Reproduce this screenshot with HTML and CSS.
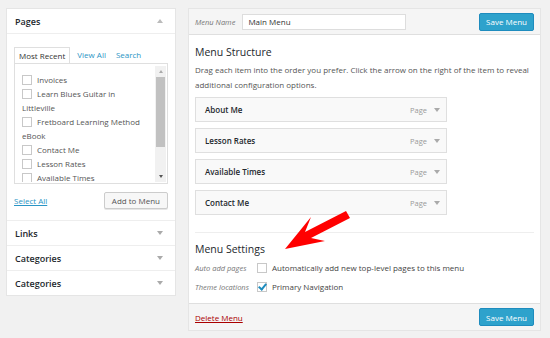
FILE: index.html
```html
<!DOCTYPE html>
<html lang="en">
<head>
  <meta charset="UTF-8">
  <title>Menus</title>
  <link rel="stylesheet" href="styles.css">
</head>
<body>
  <div class="wrap">
    <!-- Left: add items -->
    <div class="side">
      <div class="box-head open">
        <span>Pages</span><span class="tri up"></span>
      </div>
      <div class="pages-body">
        <div class="tabs">
          <span class="tab active">Most Recent</span>
          <span class="tab">View All</span>
          <span class="tab">Search</span>
        </div>
        <div class="list">
          <ul>
            <li><i class="cb"></i>Invoices</li>
            <li><i class="cb"></i>Learn Blues Guitar in Littleville</li>
            <li><i class="cb"></i>Fretboard Learning Method eBook</li>
            <li><i class="cb"></i>Contact Me</li>
            <li><i class="cb"></i>Lesson Rates</li>
            <li><i class="cb"></i>Available Times</li>
          </ul>
          <div class="scroll">
            <span class="sa"></span>
            <div class="thumb"></div>
            <span class="sb"></span>
          </div>
        </div>
        <div class="actions">
          <a class="link">Select All</a>
          <button class="btn">Add to Menu</button>
        </div>
      </div>
      <div class="box-head">
        <span>Links</span><span class="tri"></span>
      </div>
      <div class="box-head">
        <span>Categories</span><span class="tri"></span>
      </div>
      <div class="box-head">
        <span>Categories</span><span class="tri"></span>
      </div>
    </div>

    <!-- Right: menu editor -->
    <div class="editor">
      <div class="ed-head">
        <label class="ed-label">Menu Name</label>
        <input class="name" value="Main Menu">
        <button class="btn primary">Save Menu</button>
      </div>
      <div class="ed-body">
        <h3>Menu Structure</h3>
        <p class="desc">Drag each item into the order you prefer. Click the arrow on the right of the item to reveal additional configuration options.</p>
        <div class="items">
          <div class="item"><b>About Me</b><span class="type">Page</span><span class="tri"></span></div>
          <div class="item"><b>Lesson Rates</b><span class="type">Page</span><span class="tri"></span></div>
          <div class="item"><b>Available Times</b><span class="type">Page</span><span class="tri"></span></div>
          <div class="item"><b>Contact Me</b><span class="type">Page</span><span class="tri"></span></div>
        </div>
        <div class="settings">
          <h3>Menu Settings</h3>
          <div class="row"><span class="ed-label">Auto add pages</span><i class="cb"></i>Automatically add new top-level pages to this menu</div>
          <div class="row"><span class="ed-label">Theme locations</span><i class="cb checked"></i>Primary Navigation</div>
        </div>
      </div>
      <div class="ed-foot">
        <a class="delete">Delete Menu</a>
        <button class="btn primary">Save Menu</button>
      </div>
    </div>
  </div>

  <!-- annotation arrow -->
  <svg class="arrow" width="80" height="50" viewBox="0 0 80 50">
    <polygon points="5,41 31,9 25,24 66,3 70,10 31,30 45,33" fill="#f00" />
  </svg>
</body>
</html>
```

FILE: styles.css
```css
body {
  margin: 0;
  background: #f1f1f1;
  font-family: "Open Sans", "Liberation Sans", sans-serif;
  color: #444;
  font-size: 8px;
}
.wrap {
  display: flex;
  align-items: flex-start;
  gap: 12px;
  padding: 8px 9px 0 6px;
}
.side {
  width: 170px;
  background: #fff;
  border: 1px solid #e5e5e5;
  box-sizing: border-box;
}
.box-head {
  display: flex;
  justify-content: space-between;
  align-items: center;
  height: 25px;
  padding: 0 12px 0 8px;
  border-top: 1px solid #eee;
  font-size: 9px;
  font-weight: 600;
  color: #23282d;
  box-sizing: border-box;
}
.box-head.open {
  border-top: none;
  border-bottom: 1px solid #eee;
}
.tri {
  width: 0;
  height: 0;
  border-left: 3px solid transparent;
  border-right: 3px solid transparent;
  border-top: 4px solid #aaa;
}
.tri.up {
  border-top: none;
  border-bottom: 4px solid #bbb;
}
.pages-body {
  padding: 13px 7px 11px 7px;
}
.tabs {
  display: flex;
  height: 16px;
}
.tab {
  padding: 0 5px;
  line-height: 16px;
  color: #2a95c5;
}
.tab.active {
  color: #333;
  border: 1px solid #dfdfdf;
  border-bottom: none;
  background: #fff;
  line-height: 15px;
  padding: 0 4px;
  margin-right: 2px;
}
.list {
  display: flex;
  height: 121px;
  border: 1px solid #dfdfdf;
  box-sizing: border-box;
  padding: 0 0 1px 7px;
}
.list ul {
  flex: 1;
  list-style: none;
  margin: 0;
  padding: 9px 12px 0 0;
  line-height: 14px;
  overflow: hidden;
  color: #555;
}
.cb {
  display: inline-block;
  width: 8px;
  height: 8px;
  border: 1px solid #c8c8c8;
  margin-right: 5px;
  vertical-align: -2px;
  background: #fff;
  position: relative;
}
.cb.checked::after {
  content: "";
  position: absolute;
  left: 2px;
  top: -1px;
  width: 3px;
  height: 6px;
  border: solid #1e8cbe;
  border-width: 0 2px 2px 0;
  transform: rotate(40deg);
}
.scroll {
  width: 11px;
  margin: 2px 1px 0 0;
  background: #f1f1f1;
  display: flex;
  flex-direction: column;
  align-items: center;
}
.scroll .sa, .scroll .sb {
  width: 0;
  height: 0;
  border-left: 2px solid transparent;
  border-right: 2px solid transparent;
  margin: 4px 0;
}
.scroll .sa { border-bottom: 3px solid #aaa; }
.scroll .sb { border-top: 3px solid #555; margin-top: auto; }
.thumb {
  width: 9px;
  height: 70px;
  background: #c1c1c1;
}
.actions {
  display: flex;
  justify-content: space-between;
  align-items: center;
  margin-top: 8px;
}
.link {
  color: #2a95c5;
  text-decoration: underline;
}
.btn {
  font-family: inherit;
  font-size: 8px;
  height: 17px;
  padding: 0 7px;
  border: 1px solid #ccc;
  border-radius: 2px;
  background: #f7f7f7;
  color: #555;
  box-shadow: 0 1px 0 #e6e6e6;
}
.btn.primary {
  background: #2ea2cc;
  border-color: #1e8cbe;
  color: #fff;
  height: 18px;
  width: 55px;
  padding: 0;
  box-shadow: none;
}

/* editor */
.editor {
  flex: 1;
  background: #fff;
  border: 1px solid #e5e5e5;
}
.ed-head {
  display: flex;
  align-items: center;
  height: 25px;
  padding: 0 6px;
  background: #f5f5f5;
  border-bottom: 1px solid #dfdfdf;
}
.ed-label {
  font-style: italic;
  font-size: 7.5px;
  color: #777;
}
.name {
  margin-left: 7px;
  width: 164px;
  height: 16px;
  box-sizing: border-box;
  border: 1px solid #ddd;
  font-family: inherit;
  font-size: 8px;
  padding: 0 5px;
  color: #333;
}
.ed-head .btn { margin-left: auto; }
.ed-body {
  padding: 10px 6px 7px;
}
h3 {
  margin: 0;
  font-size: 10.5px;
  line-height: 14px;
  font-weight: 400;
  color: #23282d;
}
.desc {
  margin: 3px 0 5px;
  line-height: 15px;
  color: #555;
}
.items {
  display: flex;
  flex-direction: column;
  gap: 6px;
  width: 252px;
}
.item {
  display: flex;
  align-items: center;
  height: 25px;
  box-sizing: border-box;
  padding: 0 6px 0 9px;
  background: #f9f9f9;
  border: 1px solid #dfdfdf;
}
.item b {
  font-weight: 600;
  color: #23282d;
  flex: 1;
}
.item .type {
  color: #999;
  font-size: 7.5px;
  margin-right: 7px;
}
.settings {
  margin-top: 17px;
  border-top: 1px solid #eee;
  padding-top: 9px;
}
.settings h3 { margin-bottom: 2px; }
.row {
  display: flex;
  align-items: center;
  height: 19px;
  color: #444;
}
.row .ed-label { width: 62px; }
.row .cb { margin-right: 5px; vertical-align: 0; }
.ed-foot {
  display: flex;
  justify-content: space-between;
  align-items: center;
  height: 26px;
  padding: 0 6px;
  background: #f5f5f5;
  border-top: 1px solid #dfdfdf;
}
.delete {
  color: #a00;
  text-decoration: underline;
}
.arrow {
  position: absolute;
  left: 280px;
  top: 208px;
}
```
